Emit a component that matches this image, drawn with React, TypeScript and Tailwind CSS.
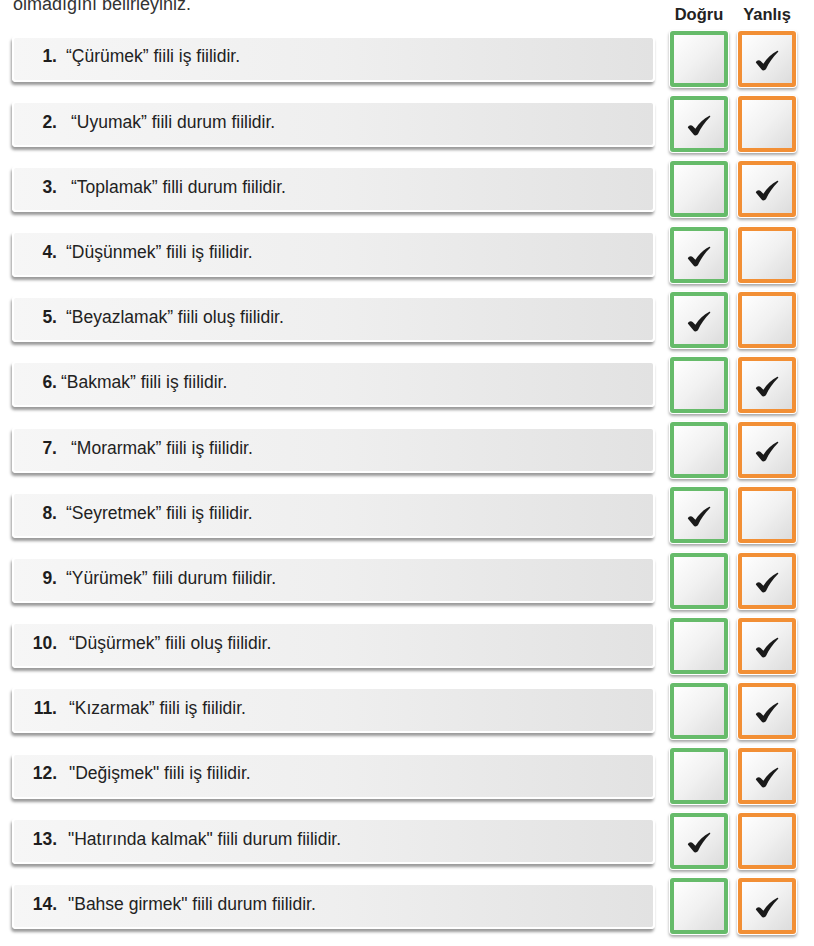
import React from 'react'

type Row = { n: string; text: string; ans: 'D' | 'Y'; gap: string }

const rows: Row[] = [
  { n: '1.', text: '“Çürümek” fiili iş fiilidir.', ans: 'Y', gap: 'ml-[9px]' },
  { n: '2.', text: '“Uyumak” fiili durum fiilidir.', ans: 'D', gap: 'ml-[14px]' },
  { n: '3.', text: '“Toplamak” filli durum fiilidir.', ans: 'Y', gap: 'ml-[14px]' },
  { n: '4.', text: '“Düşünmek” fiili iş fiilidir.', ans: 'D', gap: 'ml-[9px]' },
  { n: '5.', text: '“Beyazlamak” fiili oluş fiilidir.', ans: 'D', gap: 'ml-[9px]' },
  { n: '6.', text: '“Bakmak” fiili iş fiilidir.', ans: 'Y', gap: 'ml-[4px]' },
  { n: '7.', text: '“Morarmak” fiili iş fiilidir.', ans: 'Y', gap: 'ml-[14px]' },
  { n: '8.', text: '“Seyretmek” fiili iş fiilidir.', ans: 'D', gap: 'ml-[9px]' },
  { n: '9.', text: '“Yürümek” fiili durum fiilidir.', ans: 'Y', gap: 'ml-[9px]' },
  { n: '10.', text: '“Düşürmek” fiili oluş fiilidir.', ans: 'Y', gap: 'ml-[12px]' },
  { n: '11.', text: '“Kızarmak” fiili iş fiilidir.', ans: 'Y', gap: 'ml-[12px]' },
  { n: '12.', text: '"Değişmek" fiili iş fiilidir.', ans: 'Y', gap: 'ml-[12px]' },
  { n: '13.', text: '"Hatırında kalmak" fiili durum fiilidir.', ans: 'D', gap: 'ml-[11px]' },
  { n: '14.', text: '"Bahse girmek" fiili durum fiilidir.', ans: 'Y', gap: 'ml-[11px]' },
]

function Check() {
  return (
    <svg width="24" height="21" viewBox="0 0 24 21" className="mt-[3px]">
      <path
        d="M0.8 12.6 C1.6 10.4 4 9.6 5.6 11 L8.4 13.8 C12 8.2 16.6 3.6 22.4 0.8 C23.2 0.6 23.6 1.4 23 2 C17.8 7 13.8 13 11 19 C10.2 20.6 7.6 21 6.6 19.6 Z"
        fill="#1a1a1a"
      />
    </svg>
  )
}

function Box({ color, checked }: { color: 'green' | 'orange'; checked: boolean }) {
  return (
    <div className="w-[60px] h-[58px] rounded-[4px] p-[1px] bg-white shadow-[0_2px_3px_rgba(0,0,0,0.35)]">
      <div
        className={
          'w-full h-full rounded-[3px] border-[4px] flex items-center justify-center bg-gradient-to-br from-white via-[#f1f1f1] to-[#dcdcdc] ' +
          (color === 'green' ? 'border-[#66bb6a]' : 'border-[#f28f35]')
        }
      >
        {checked && <Check />}
      </div>
    </div>
  )
}

export default function App() {
  return (
    <div
      className="w-[814px] h-[946px] bg-white overflow-hidden"
      style={{ fontFamily: '"Liberation Sans", Arial, sans-serif' }}
    >
      {/* başlık */}
      <div className="flex h-[30px] pl-[13px] pr-[17px]">
        <p className="flex-1 -mt-[7px] text-[18px] leading-[22px] text-[#333]">olmadığını belirleyiniz.</p>
        <div className="flex gap-[8px] mt-[5px]">
          <span className="w-[60px] text-center text-[16.5px] leading-[19px] font-bold text-[#222]">Doğru</span>
          <span className="w-[60px] text-center text-[16.5px] leading-[19px] font-bold text-[#222]">Yanlış</span>
        </div>
      </div>

      <div className="flex flex-col gap-[7.2px] pl-[12px] pr-[17px]">
        {rows.map(r => (
          <div key={r.n} className="flex items-center h-[58px]">
            <div className="flex-1 h-[46px] -mt-[1px] rounded-[4px] border-2 border-white bg-gradient-to-r from-[#f6f6f6] via-[#efefef] to-[#e2e2e2] shadow-[-1px_3px_3px_rgba(0,0,0,0.4)] flex items-center pl-[16px] pb-[4px]">
              <span className="w-[27px] text-right text-[17.5px] font-bold text-[#1e1e1e]">{r.n}</span>
              <span className={'text-[17.5px] text-[#222] ' + r.gap}>{r.text}</span>
            </div>
            <div className="flex gap-[8px] ml-[14px]">
              <Box color="green" checked={r.ans === 'D'} />
              <Box color="orange" checked={r.ans === 'Y'} />
            </div>
          </div>
        ))}
      </div>
    </div>
  )
}
